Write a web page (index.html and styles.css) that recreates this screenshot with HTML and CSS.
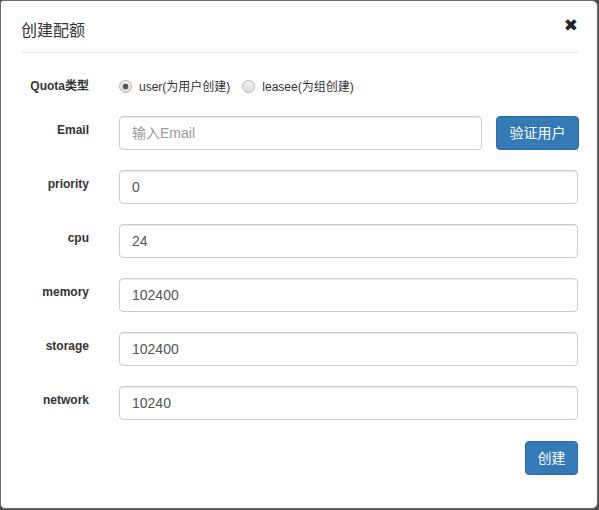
FILE: index.html
```html
<!DOCTYPE html>
<html lang="zh-CN">
<head>
<meta charset="utf-8">
<title>创建配额</title>
<link rel="stylesheet" href="styles.css">
</head>
<body>
<div class="modal">
  <div class="modal-header">
    <h4 class="modal-title">创建配额</h4>
    <button class="close" type="button">&#x2716;</button>
  </div>
  <form class="modal-body">
    <div class="row row-radio">
      <label class="control-label">Quota类型</label>
      <div class="radios">
        <label class="radio"><input type="radio" name="qt" checked><span>user(为用户创建)</span></label>
        <label class="radio"><input type="radio" name="qt"><span>leasee(为组创建)</span></label>
      </div>
    </div>
    <div class="row">
      <label class="control-label">Email</label>
      <div class="inline">
        <input class="form-control" type="text" placeholder="输入Email">
        <button class="btn" type="button">验证用户</button>
      </div>
    </div>
    <div class="row">
      <label class="control-label">priority</label>
      <input class="form-control" type="text" value="0">
    </div>
    <div class="row">
      <label class="control-label">cpu</label>
      <input class="form-control" type="text" value="24">
    </div>
    <div class="row">
      <label class="control-label">memory</label>
      <input class="form-control" type="text" value="102400">
    </div>
    <div class="row">
      <label class="control-label">storage</label>
      <input class="form-control" type="text" value="102400">
    </div>
    <div class="row">
      <label class="control-label">network</label>
      <input class="form-control" type="text" value="10240">
    </div>
    <div class="footer">
      <button class="btn" type="button">创建</button>
    </div>
  </form>
</div>
</body>
</html>
```
FILE: styles.css
```css
* { box-sizing: border-box; }
html, body { margin: 0; padding: 0; }
body {
  background: #4d4d4d;
  font-family: "Liberation Sans", Arial, "Noto Sans CJK SC", sans-serif;
  color: #333;
  width: 599px;
  height: 510px;
  overflow: hidden;
}
.modal {
  background: #fff;
  width: 598px;
  height: 509px;
  border-radius: 6px;
  border: 1px solid #6a6a6a;
  border-top-left-radius: 3px;
  border-bottom-left-radius: 5px;
}
.modal-header {
  margin: 0 19px 0 20px;
  height: 52px;
  border-bottom: 1px solid #e5e5e5;
  display: flex;
  align-items: center;
  justify-content: space-between;
  padding-top: 5px;
}
.modal-title {
  margin: 0;
  font-size: 16px;
  font-weight: normal;
  color: #333;
}
.close {
  border: 0;
  background: none;
  padding: 0;
  margin: -8px 0 0 0;
  font-size: 17px;
  font-weight: bold;
  color: #222;
  line-height: 1;
  font-family: "DejaVu Sans", sans-serif;
}
.modal-body {
  margin: 0;
  padding: 19px 19px 0 20px;
  display: flex;
  flex-direction: column;
}
.row {
  display: grid;
  grid-template-columns: 68px 1fr;
  column-gap: 30px;
  align-items: start;
  margin-bottom: 20px;
}
.row-radio { margin-bottom: 10px; height: 34px; }
.control-label {
  text-align: right;
  font-size: 12px;
  font-weight: bold;
  padding-top: 6px;
  line-height: 17px;
}
.radios {
  display: flex;
  gap: 12px;
  padding-top: 7px;
}
.radio {
  display: flex;
  align-items: center;
  font-size: 12px;
  line-height: 17px;
}
.radio input {
  appearance: none;
  -webkit-appearance: none;
  margin: 0 7px 3px 0;
  width: 13px;
  height: 13px;
  border-radius: 50%;
  border: 1px solid #b4b4b4;
  background: linear-gradient(#f4f4f4, #dcdcdc);
}
.radio input:checked {
  background: radial-gradient(circle, #555 0 2.6px, transparent 3.2px), linear-gradient(#f4f4f4, #dcdcdc);
}
.form-control {
  display: block;
  width: 100%;
  height: 34px;
  padding: 6px 12px;
  font-size: 14px;
  font-family: inherit;
  color: #555;
  background: #fff;
  border: 1px solid #ccc;
  border-radius: 4px;
  box-shadow: inset 0 1px 1px rgba(0,0,0,.075);
  outline: none;
}
.form-control::placeholder { color: #999; }
.inline {
  display: flex;
  gap: 14px;
}
.inline .form-control { width: 363px; flex: none; }
.btn {
  height: 34px;
  padding: 6px 12px;
  font-size: 14px;
  font-family: inherit;
  color: #fff;
  background: #337ab7;
  border: 1px solid #2e6da4;
  border-radius: 4px;
  line-height: 20px;
  white-space: nowrap;
}
.inline .btn { width: 83px; }
.footer {
  display: flex;
  justify-content: flex-end;
  padding-top: 1px;
}
.footer .btn { width: 53px; padding: 6px 0; }
```
